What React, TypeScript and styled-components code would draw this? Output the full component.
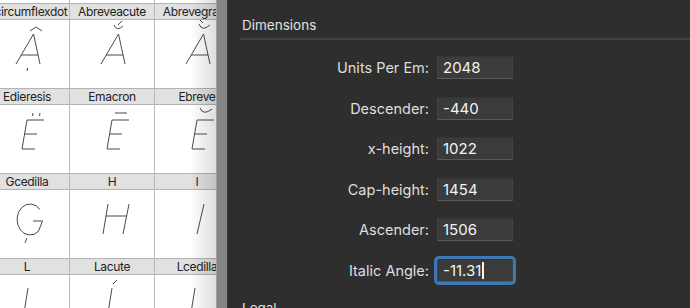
import { Fragment } from 'react';
import styled, { createGlobalStyle } from 'styled-components';

const GlobalStyle = createGlobalStyle`
  html, body {
    margin: 0;
    padding: 0;
    background: #2e2e2e;
  }
  * {
    box-sizing: border-box;
  }
`;

const Window = styled.div`
  display: flex;
  width: 690px;
  height: 308px;
  overflow: hidden;
  font-family: Inter, 'Noto Sans', sans-serif;
`;

// ---- glyph grid (left) ----

const GridPane = styled.div`
  position: relative;
  width: 216px;
  flex: none;
  overflow: hidden;
  background: #fff;

  &::after {
    content: '';
    position: absolute;
    top: 0;
    right: 0;
    bottom: 0;
    width: 26px;
    background: linear-gradient(to right, rgba(0, 0, 0, 0), rgba(0, 0, 0, 0.13));
    pointer-events: none;
  }
`;

const Grid = styled.div`
  display: grid;
  grid-template-columns: repeat(3, 85px);
  margin-left: -15px;
`;

const Cell = styled.div<{ $stub?: boolean }>`
  display: flex;
  flex-direction: column;
  height: ${(p) => (p.$stub ? '3px' : '85px')};
  border-right: 1px solid #b9b9b9;
  background: #fff;
`;

const CellLabel = styled.div`
  display: flex;
  justify-content: center;
  height: 17px;
  flex: none;
  background: #e1e1e1;
  border-top: 1px solid #b3b3b3;
  border-bottom: 1px solid #b3b3b3;
  font-size: 12px;
  line-height: 15px;
  letter-spacing: -0.35px;
  color: #222;
  white-space: nowrap;
`;

const GlyphSvg = styled.svg`
  display: block;
  width: 84px;
  height: 68px;
  overflow: hidden;
`;

const A = 'M31 44 L48.5 14 L55 44 M36 35 L53 35';
const E = 'M42 15 L59 15 M42 15 L37 44 L50 44 M39.5 29 L52 29';

const glyphs: { name: string; d: string }[] = [
  { name: 'Acircumflexdot', d: `${A} M45 11 L51 7 L57 11 M42.5 48 L42 51` },
  { name: 'Abreveacute', d: `${A} M44 5 Q47 12 53 6 M48 5 L52 1` },
  { name: 'Abrevegrave', d: `${A} M44 4 Q47 12 55 5 M45 0 L48 3` },
  { name: 'Edieresis', d: `${E} M48 8 L47.5 11 M55 8 L54.5 11` },
  { name: 'Emacron', d: `${E} M45 8 L57 8` },
  { name: 'Ebreve', d: `${E} M45 3 Q48 11 57 4` },
  {
    name: 'Gcedilla',
    d: 'M55 19.5 A13 15.5 0 1 0 53.4 41.4 L57.5 31 L48 31 M40 53 L42 48',
  },
  { name: 'H', d: 'M38 14 L33 44 M59 14 L53 44 M36 26 L57 26' },
  { name: 'I', d: 'M49 14 L42 44' },
  { name: 'L', d: 'M43 13 L38 44 L51 44' },
  { name: 'Lacute', d: 'M42 13 L37 44 L50 44 M43 9 L47 5' },
  { name: 'Lcedilla', d: 'M40 13 L35 44 L48 44' },
];

const GlyphCell = ({ name, d }: { name: string; d: string }) => (
  <Cell>
    <CellLabel>{name}</CellLabel>
    <GlyphSvg viewBox="0 0 84 68">
      <path d={d} fill="none" stroke="#4a4a4a" strokeWidth="1" />
    </GlyphSvg>
  </Cell>
);

// ---- splitter ----

const Splitter = styled.div`
  width: 12px;
  flex: none;
  background: #858585;
  border-left: 1px solid #a2a2a2;
  border-right: 1px solid #3a3a3a;
`;

// ---- info panel (right) ----

const Panel = styled.div`
  flex: 1;
  background: #2e2e2e;
  padding: 18px 0 0 12px;
  color: #dcdcdc;
`;

const SectionTitle = styled.div`
  padding: 0 0 6px 2px;
  font-size: 13.5px;
  line-height: 14px;
  color: #e2e2e2;
  border-bottom: 2px solid #414141;
`;

const Form = styled.div`
  display: grid;
  grid-template-columns: 189px 76px;
  grid-auto-rows: 23px;
  column-gap: 8px;
  row-gap: 17.5px;
  align-items: center;
  margin: 16px 0 19px;
`;

const Label = styled.div`
  text-align: right;
  font-size: 14.5px;
  color: #dedede;
  white-space: nowrap;
`;

const Field = styled.div<{ $focused?: boolean }>`
  display: flex;
  align-items: center;
  height: 23px;
  padding: 0 5px;
  background: #3b3b3b;
  border: 1px solid #434343;
  border-top-color: #353535;
  border-bottom-color: #5a5a5a;
  font-size: 15px;
  color: #f2f2f2;
  border-radius: ${(p) => (p.$focused ? '2px' : '0')};
  box-shadow: ${(p) => (p.$focused ? '0 0 0 3px #3b78b4' : 'none')};
`;

const Caret = styled.span`
  display: inline-block;
  width: 1.5px;
  height: 17px;
  margin-left: 1px;
  background: #f4f4f4;
`;

const fields = [
  { label: 'Units Per Em:', value: '2048' },
  { label: 'Descender:', value: '-440' },
  { label: 'x-height:', value: '1022' },
  { label: 'Cap-height:', value: '1454' },
  { label: 'Ascender:', value: '1506' },
  { label: 'Italic Angle:', value: '-11.31', focused: true },
];

export default function App() {
  return (
    <>
      <GlobalStyle />
      <Window>
        <GridPane>
          <Grid>
            <Cell $stub />
            <Cell $stub />
            <Cell $stub />
            {glyphs.map((g) => (
              <GlyphCell key={g.name} name={g.name} d={g.d} />
            ))}
          </Grid>
        </GridPane>
        <Splitter />
        <Panel>
          <SectionTitle>Dimensions</SectionTitle>
          <Form>
            {fields.map((f) => (
              <Fragment key={f.label}>
                <Label>{f.label}</Label>
                <Field $focused={f.focused}>
                  {f.value}
                  {f.focused && <Caret />}
                </Field>
              </Fragment>
            ))}
          </Form>
          <SectionTitle>Legal</SectionTitle>
        </Panel>
      </Window>
    </>
  );
}
